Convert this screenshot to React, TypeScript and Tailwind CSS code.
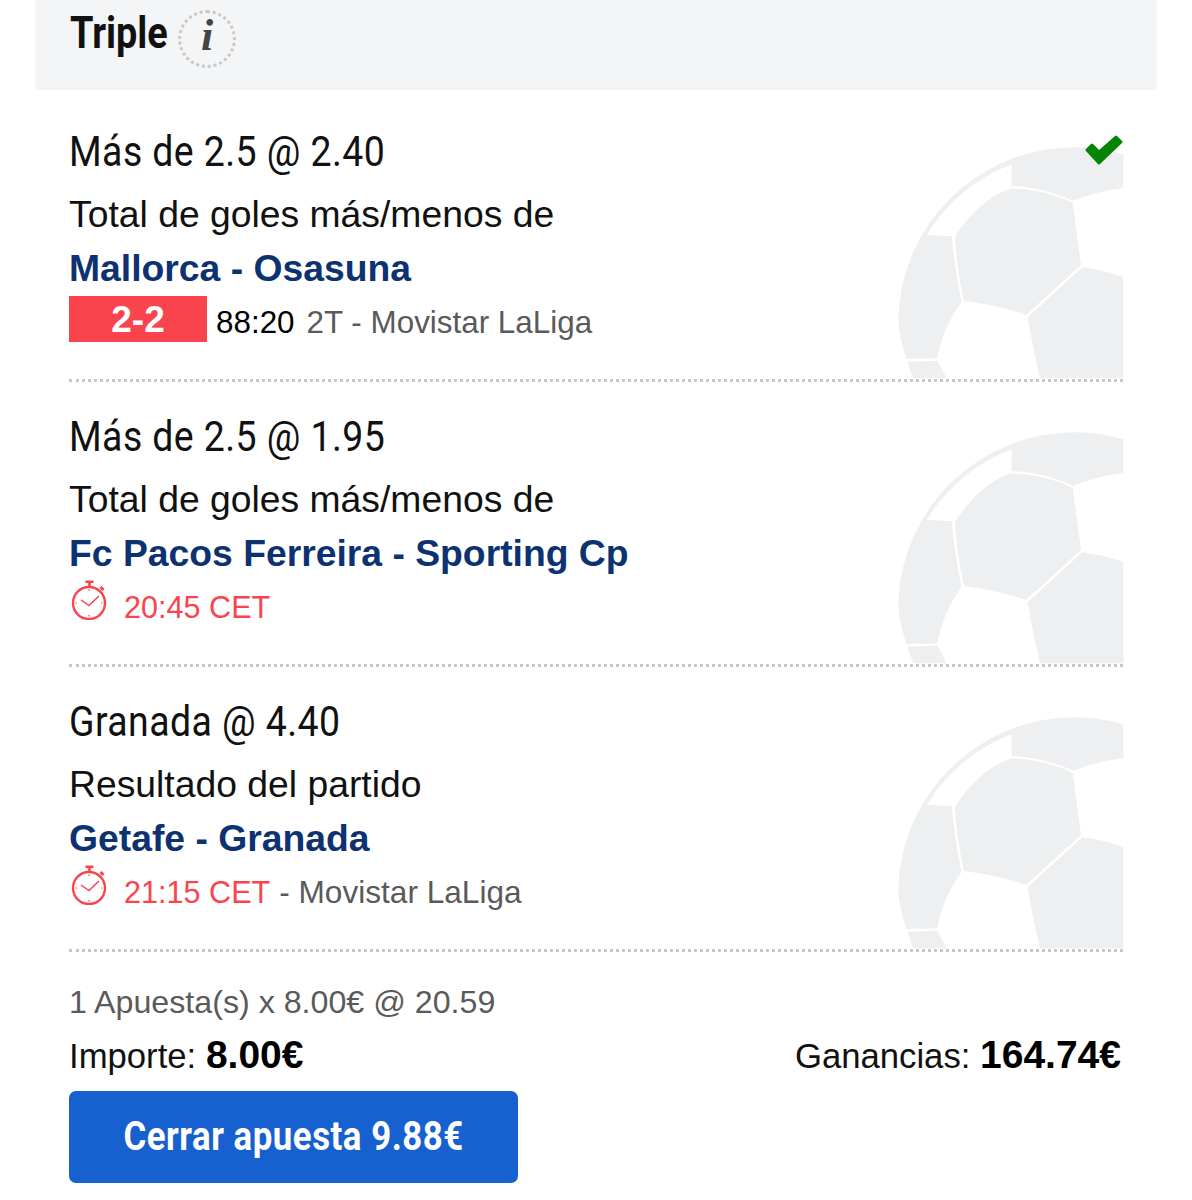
import type { ReactNode } from 'react';

type Bet = {
  pick: string;
  market: string;
  match: string;
  won?: boolean;
  status: ReactNode;
};

const Ball = () => (
  <svg
    viewBox="0 0 780 810"
    className="absolute right-[-17px] bottom-[-11px] h-[270px] w-[260px]"
    fill="#eeeff1"
  >
    <path d="M55 600 A528 528 0 0 1 730 103 L730 205 C670 212 620 225 580 243 C520 215 455 200 395 198 L395 133 A508 508 0 0 0 140 345 L215 348 C222 420 232 490 245 545 C205 600 182 660 172 715 L80 717 C66 680 57 640 55 600 Z" />
    <path d="M225 350 C270 280 330 225 395 205 C460 208 525 222 578 248 L603 435 L438 585 C380 565 315 550 252 543 C238 480 228 415 225 350 Z" />
    <path d="M607 442 C650 448 695 458 730 472 L730 775 L480 775 C465 710 452 650 443 592 Z" />
    <path d="M82 725 L172 722 L200 775 L100 775 C93 758 87 742 82 725 Z" />
  </svg>
);

const Stopwatch = () => (
  <svg
    viewBox="0 0 36 42"
    className="mb-[10px] ml-[2px] h-[42px] w-[36px] shrink-0"
    fill="none"
    stroke="#f9444e"
  >
    <circle cx="18" cy="25" r="16" strokeWidth="2.4" />
    <path d="M14.5 3.7 H22.5 M18.5 3.7 V9" strokeWidth="2.6" />
    <path d="M29.5 9 L32.5 12" strokeWidth="3" />
    <path d="M10 22 L18 27.5 L28 18" strokeWidth="1.5" />
    <path d="M18 11.5 V13 M18 37 V38.5 M4.5 25 H6 M30 25 H31.5" strokeWidth="1.2" />
  </svg>
);

const bets: Bet[] = [
  {
    pick: 'Más de 2.5 @ 2.40',
    market: 'Total de goles más/menos de',
    match: 'Mallorca - Osasuna',
    won: true,
    status: (
      <div className="flex h-[46px] items-center">
        <span className="flex h-[46px] w-[138px] items-center justify-center bg-[#f9444e] pt-[2px] text-[37px] font-bold text-white">
          2-2
        </span>
        <span className="ml-[9px] pt-[8px] text-[31.4px] text-black">88:20</span>
        <span className="ml-[12px] pt-[8px] text-[31.4px] text-[#5a5a5a]">2T - Movistar LaLiga</span>
      </div>
    ),
  },
  {
    pick: 'Más de 2.5 @ 1.95',
    market: 'Total de goles más/menos de',
    match: 'Fc Pacos Ferreira - Sporting Cp',
    status: (
      <div className="flex h-[46px] items-center">
        <Stopwatch />
        <span className="ml-[17px] pt-[8px] text-[30.6px] text-[#f9444e]">20:45 CET</span>
      </div>
    ),
  },
  {
    pick: 'Granada @ 4.40',
    market: 'Resultado del partido',
    match: 'Getafe - Granada',
    status: (
      <div className="flex h-[46px] items-center">
        <Stopwatch />
        <span className="ml-[17px] pt-[8px] text-[30.6px] text-[#f9444e]">21:15 CET</span>
        <span className="ml-[9px] pt-[8px] text-[31.6px] text-[#5a5a5a]">- Movistar LaLiga</span>
      </div>
    ),
  },
];

const BetRow = ({ pick, market, match, won, status }: Bet) => (
  <div className="relative h-[285px] border-b-[3px] border-dotted border-[#c8c8c8] pt-[34px]">
    <Ball />
    {won && (
      <svg viewBox="0 0 38 30" className="absolute top-[38px] right-0 h-[30px] w-[38px]" fill="#058505">
        <path
          d="M2 15 L7 10 L14 17 L31 2 L36 7 L14 28 Z"
          stroke="#058505"
          strokeWidth="3"
          strokeLinejoin="round"
        />
      </svg>
    )}
    <div className="relative">
      <div className="h-[40px] origin-left scale-x-[0.87] font-['Roboto'] text-[43px] leading-[40px] tracking-[0.5px] whitespace-nowrap text-[#111]">
        {pick}
      </div>
      <div className="mt-[25px] h-[36px] text-[37.3px] leading-[36px] whitespace-nowrap text-[#111]">
        {market}
      </div>
      <div className="mt-[18px] h-[36px] text-[37.3px] leading-[36px] font-bold whitespace-nowrap text-[#0d3272]">
        {match}
      </div>
      <div className="mt-[10px]">{status}</div>
    </div>
  </div>
);

export default function App() {
  return (
    <div className="h-[1200px] w-[1192px] overflow-hidden bg-white font-['Liberation_Sans',sans-serif]">
      <div className="mx-[35px] flex h-[90px] items-start gap-[9px] rounded-b-[4px] bg-[#f4f5f7] px-[35px] pt-[10px]">
        <span className="w-[99px] origin-left scale-x-[0.86] font-['Roboto'] text-[44px] leading-[46px] font-bold text-[#111]">
          Triple
        </span>
        <span className="flex h-[58px] w-[58px] items-center justify-center rounded-full border-[3px] border-dotted border-[#c8c8c8] pb-[6px] font-['Liberation_Serif'] text-[44px] font-bold text-[#444] italic">
          i
        </span>
      </div>

      <div className="mx-[69px] mt-[7px] w-[1054px]">
        {bets.map((bet) => (
          <BetRow key={bet.match} {...bet} />
        ))}

        <div className="mt-[32px] h-[36px] text-[32.2px] leading-[36px] whitespace-nowrap text-[#5a5a5a]">
          1 Apuesta(s) x 8.00€ @ 20.59
        </div>
        <div className="mt-[17px] flex h-[36px] items-center justify-between pr-[2px] text-[34.7px] text-[#111]">
          <span>
            Importe: <b className="text-[39px] text-black">8.00€</b>
          </span>
          <span>
            Ganancias: <b className="text-[39px] text-black">164.74€</b>
          </span>
        </div>
        <button className="mt-[18px] flex h-[92px] w-[449px] items-center justify-center rounded-[7px] bg-[#1660d0]">
          <span className="scale-x-[0.87] font-['Roboto'] text-[40px] font-bold tracking-[0.6px] whitespace-nowrap text-white">
            Cerrar apuesta 9.88€
          </span>
        </button>
      </div>
    </div>
  );
}
